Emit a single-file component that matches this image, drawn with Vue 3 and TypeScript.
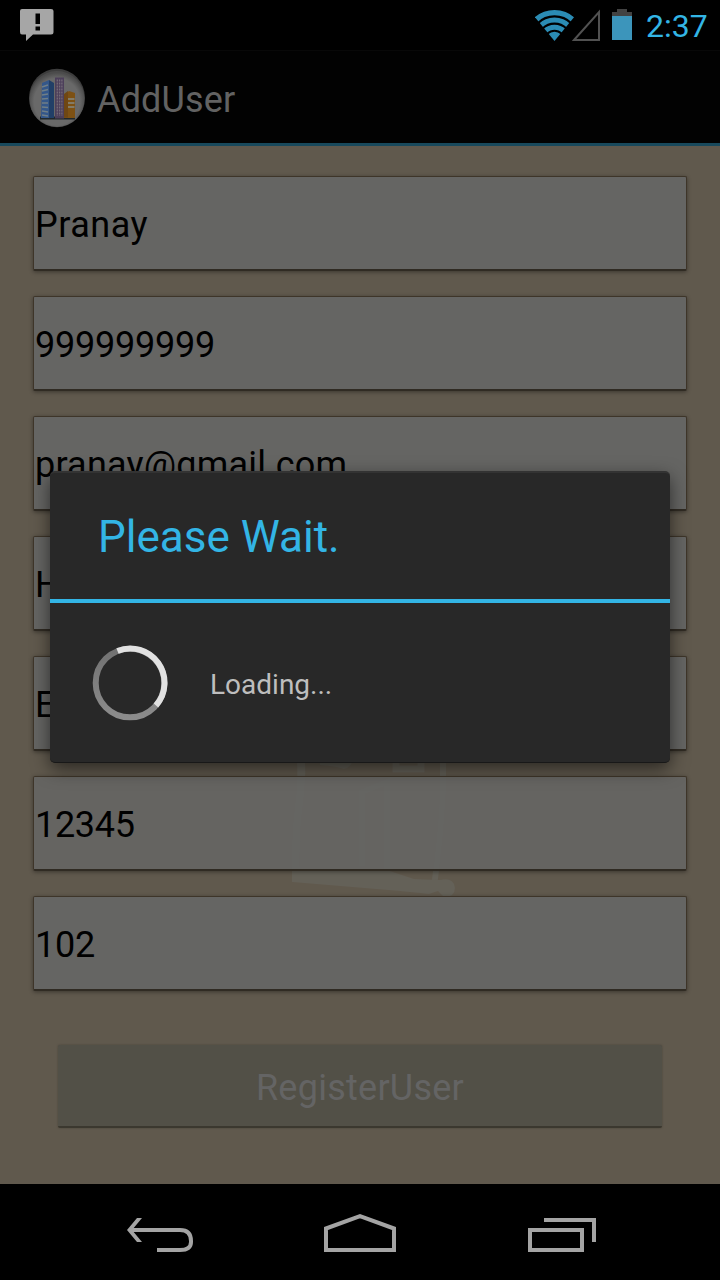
<script setup lang="ts">
interface Field {
  id: string
  value: string
  spacing: number
}

const fields: Field[] = [
  { id: 'name', value: 'Pranay', spacing: 0.5 },
  { id: 'phone', value: '999999999', spacing: -0.22 },
  { id: 'email', value: 'pranay@gmail.com', spacing: 0.2 },
  { id: 'building', value: 'H', spacing: 0 },
  { id: 'block', value: 'E', spacing: 0 },
  { id: 'code', value: '12345', spacing: -0.3 },
  { id: 'flat', value: '102', spacing: -0.22 },
]
</script>

<template>
  <div class="screen">
    <header class="status">
      <svg class="notice" width="34" height="34" viewBox="0 0 34 34">
        <path d="M2 0H31Q33.500 0 33.500 2V23Q33.500 25.500 31 25.500H13L6 32V25.500H2Q0 25.500 0 23V2Q0 0 2 0Z" fill="#a6a6a6" />
        <path d="M15.500 4.500H20V15H15.500ZM15.500 17.500H20V21.500H15.500Z" fill="#000" />
      </svg>
      <svg class="signals" width="102" height="34" viewBox="0 0 102 34">
        <defs>
          <clipPath id="wifi-fan"><path d="M19.500 32L-1 7V0H40V7Z" /></clipPath>
        </defs>
        <g clip-path="url(#wifi-fan)" fill="none" stroke="#2b8cb4" stroke-width="5.300">
          <circle cx="19.500" cy="31.500" r="27.800" />
          <circle cx="19.500" cy="31.500" r="20.400" stroke-width="5" />
          <circle cx="19.500" cy="31.500" r="13.300" stroke-width="5" />
          <circle cx="19.500" cy="31.500" r="4.400" stroke-width="8.800" />
        </g>
        <path d="M39 31L64 3V31Z" fill="none" stroke="#515151" stroke-width="2" />
        <path d="M77 3H82V0H92V3H97V8H77Z" fill="#424242" />
        <path d="M77 7H97V31H77Z" fill="#3c95bb" />
      </svg>
      <span class="clock">2:37</span>
    </header>

    <div class="action-bar">
      <svg class="app-icon" width="58" height="60" viewBox="0 0 58 60">
        <defs>
          <radialGradient id="disc" cx="50%" cy="55%" r="52%">
            <stop offset="0.8" stop-color="#696969" />
            <stop offset="1" stop-color="#4b4b4b" />
          </radialGradient>
        </defs>
        <ellipse cx="29" cy="30" rx="28" ry="29.300" fill="#3d3d3d" />
        <ellipse cx="29" cy="31" rx="27.500" ry="28" fill="url(#disc)" />
        <path d="M12 48.500H47V51.500H12Z" fill="#20282b" />
        <path d="M14 15L21 12V50H13Z" fill="#34578a" />
        <path d="M21 12L26 15V50H21Z" fill="#213f67" />
        <path d="M14 19L20 17M14 23L20 21.500M14 27L20 26M14 31L20 30.500M14 35L20 35M14 39L20 39.500M14 43L20 44M14 47L20 48" stroke="#6f7e87" stroke-width="1.500" />
        <path d="M27 9.500H36V50.500H27Z" fill="#4c3f5a" />
        <path d="M29.300 11.500V48M31.600 11.500V48M33.900 11.500V48" stroke="#746b78" stroke-width="1.300" stroke-dasharray="2 1" />
        <path d="M36 26L40 23V50H36Z" fill="#6b4716" />
        <path d="M36 27L41 23L47 25V50H36Z" fill="#7d5114" />
        <path d="M36 27L40 24V49.500H36Z" fill="#6f4714" />
        <path d="M40 31H46.500M40 35H46.500M40 39H46.500" stroke="#837b67" stroke-width="2" />
      </svg>
      <h1 class="title">AddUser</h1>
    </div>

    <main class="content">
      <svg class="watermark" width="180" height="150" viewBox="0 0 180 150">
        <g fill="none" stroke="#646158">
          <path d="M10 0Q13 26 9 55T6 123" stroke-width="8" />
          <path d="M153 0V41Q151 85 144 137" stroke-width="6" />
          <path d="M72 116V42L97 32V120" stroke-width="6" />
          <path d="M106 0V19H131V0M116 0V13" stroke-width="7" />
        </g>
        <path d="M2 118L100 121L124 129L150 130Q164 127 165 138Q165 147 154 147L148 141L139 144L110 141L2 132Z" fill="#646158" />
        <path d="M30 0H65Q64 17 54 19Q45 16 30 15Z" fill="#625f56" />
      </svg>
      <form class="form" @submit.prevent>
        <div v-for="field in fields" :key="field.id" class="field" :class="{ marked: field.id === 'code' }">
          <span class="value" :style="{ letterSpacing: field.spacing + 'px' }">{{ field.value }}</span>
        </div>
        <button class="register" type="button"><span>RegisterUser</span></button>
      </form>
    </main>

    <nav class="nav">
      <svg width="720" height="96" viewBox="0 0 720 96" fill="none" stroke="#a4a4a4" stroke-width="4">
        <path d="M157 66H180Q191 66 191 58V57Q191 46 180 46H130" />
        <path d="M142 34H137L127 46L137 58H142L132 46Z" fill="#a4a4a4" stroke="none" />
        <path d="M326 66V44.500L360 32.200L394 44.500V66Z" />
        <path d="M530 46H582V66H530ZM544 36H594V58" />
      </svg>
    </nav>

    <section class="dialog" role="dialog" aria-labelledby="wait-title">
      <h2 id="wait-title" class="dialog-title">Please Wait.</h2>
      <div class="dialog-body">
        <svg class="spinner" width="76" height="76" viewBox="0 0 76 76" fill="none" stroke-width="6">
          <defs>
            <linearGradient id="track" x1="0" y1="0" x2="0" y2="1">
              <stop offset="0" stop-color="#717171" />
              <stop offset="1" stop-color="#8c8c8c" />
            </linearGradient>
          </defs>
          <circle cx="38" cy="38" r="34.300" stroke="url(#track)" />
          <path d="M25.500 6A34.300 34.300 0 0 1 64 60.500" stroke="#e1e1e1" />
        </svg>
        <span class="message">Loading...</span>
      </div>
    </section>
  </div>
</template>

<style>
body {
  margin: 0;
  background: #000;
}
</style>

<style scoped>
.screen {
  position: relative;
  display: grid;
  grid-template-rows: 50px 96px 1038px 96px;
  width: 720px;
  height: 1280px;
  overflow: hidden;
  background: #000;
  font-family: Roboto, "Liberation Sans", sans-serif;
}
.status {
  display: flex;
  align-items: flex-start;
  box-sizing: border-box;
  padding: 9px 12px 0 19.5px;
}
.signals {
  margin-left: auto;
}
.clock {
  width: 62px;
  margin-left: 9px;
  color: #33b5e5;
  font-size: 32px;
  line-height: 34px;
}
.action-bar {
  display: flex;
  align-items: center;
  box-sizing: border-box;
  padding-left: 28px;
  border-top: 1px solid #080808;
  border-bottom: 3px solid #18495c;
  background: #020202;
}
.app-icon {
  margin-top: 2px;
}
.title {
  margin: 5px 0 0 11px;
  color: #626262;
  font-size: 36px;
  font-weight: 400;
  letter-spacing: 0.15px;
  line-height: 42px;
}
.content {
  position: relative;
  background: #60594d;
}
.watermark {
  position: absolute;
  left: 290px;
  top: 604px;
}
.form {
  position: relative;
  display: flex;
  flex-direction: column;
  gap: 25px;
  padding: 30px 33px 0;
}
.field {
  display: flex;
  align-items: center;
  box-sizing: border-box;
  height: 95px;
  padding: 3px 0 0 1px;
  border: 1px solid #3e3529;
  border-bottom: 2px solid #302b23;
  border-radius: 2px;
  background: #656563;
  box-shadow: 0 1px 4px rgba(0, 0, 0, 0.4);
}
.marked {
  background: rgba(101, 101, 99, 0.91);
}
.value {
  color: #000;
  font-size: 36px;
  line-height: 42px;
  white-space: nowrap;
}
.register {
  height: 83px;
  margin: 29px 25px 0;
  padding: 5px 0 0;
  border: 0;
  border-bottom: 2px solid #3b382f;
  border-radius: 2px;
  background: #525047;
  box-shadow: 0 0 2px #474238;
  color: #646464;
  font-family: inherit;
  font-size: 36px;
  letter-spacing: 0.25px;
  line-height: 42px;
}
.nav {
  background: #000;
}
.nav svg {
  display: block;
}
.dialog {
  position: absolute;
  left: 50px;
  top: 471px;
  width: 620px;
  height: 292px;
  box-sizing: border-box;
  border-top: 2px solid #333;
  border-bottom: 1px solid #181818;
  border-radius: 5px;
  background: #282828;
  box-shadow: 0 6px 18px rgba(0, 0, 0, 0.55);
}
.dialog-title {
  box-sizing: border-box;
  height: 130px;
  margin: 0;
  padding: 38px 0 0 48px;
  border-bottom: 4px solid #33b5e5;
  color: #33b5e5;
  font-size: 44px;
  font-weight: 400;
  line-height: 52px;
}
.dialog-body {
  display: flex;
  align-items: center;
  height: 160px;
  padding-left: 42px;
}
.message {
  margin: 4px 0 0 42px;
  color: #bebebe;
  font-size: 28px;
  line-height: 34px;
}
</style>
